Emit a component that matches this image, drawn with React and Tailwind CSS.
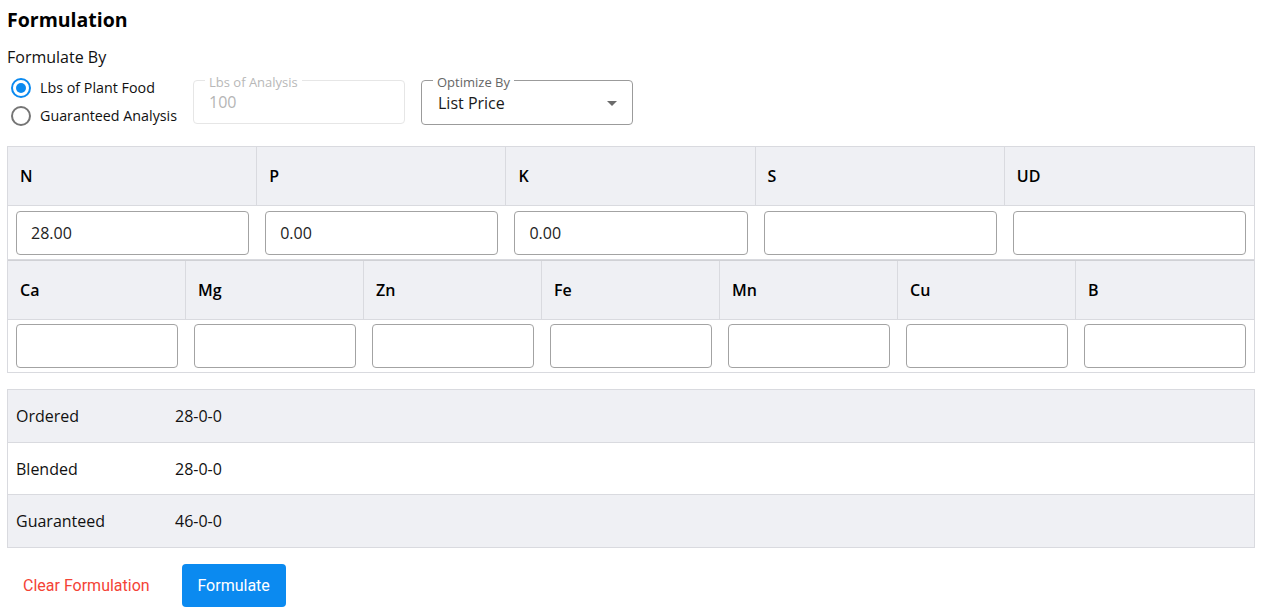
import React from "react";

const font = { fontFamily: '"Open Sans", "Noto Sans", sans-serif' };

const row1 = ["N", "P", "K", "S", "UD"];
const vals1 = ["28.00", "0.00", "0.00", "", ""];
const row2 = ["Ca", "Mg", "Zn", "Fe", "Mn", "Cu", "B"];

function Field({ v }) {
  return (
    <div className="h-[44px] rounded border border-[#a3a3a3] bg-white flex items-center pl-[14px] text-[16px] text-[#222]">
      {v}
    </div>
  );
}

function Grid({ names, values, cols, first }) {
  return (
    <div className={"border border-[#d9dadf] " + (first ? "" : "border-t-0")}>
      <div className={"grid bg-[#eff0f4] h-[59px] border-b border-[#d9dadf] " + (first ? "" : "border-t border-t-[#d0d1d5] h-[60px] ") + cols}>
        {names.map((n, i) => (
          <div key={n} className={"flex items-center pl-[12px] text-[16px] font-semibold text-black " + (i < names.length - 1 ? "border-r border-[#d9dadf]" : "")}>
            {n}
          </div>
        ))}
      </div>
      <div className={"grid pb-[4px] " + (first ? "pt-[5px] " : "pt-[4px] ") + cols}>
        {names.map((n, i) => (
          <div key={n} className="pl-[8px] pr-[8px]">
            <Field v={values ? values[i] : ""} />
          </div>
        ))}
      </div>
    </div>
  );
}

const summary = [
  ["Ordered", "28-0-0", true],
  ["Blended", "28-0-0", false],
  ["Guaranteed", "46-0-0", true],
];

export default function App() {
  return (
    <div className="bg-white min-h-[614px] pl-[7px] pr-[8px] pt-[6px] text-[#111]" style={font}>
      <h2 className="text-[19.5px] font-bold leading-[28px] text-black">Formulation</h2>
      <div className="mt-[12px] text-[16px] leading-[22px]">Formulate By</div>

      <div className="flex items-start mt-[2px]">
        <div className="flex flex-col w-[170px] shrink-0 pt-[4px] whitespace-nowrap">
          <label className="flex items-center h-[28px] gap-[9px] pl-[4px] text-[14.3px]">
            <span className="shrink-0 w-[20px] h-[20px] rounded-full border-2 border-[#0b8af0] flex items-center justify-center">
              <span className="w-[10px] h-[10px] rounded-full bg-[#0b8af0]" />
            </span>
            Lbs of Plant Food
          </label>
          <label className="flex items-center h-[28px] gap-[9px] pl-[4px] text-[14.3px]">
            <span className="shrink-0 w-[20px] h-[20px] rounded-full border-2 border-[#757575]" />
            Guaranteed Analysis
          </label>
        </div>

        <div className="relative ml-[16px] mt-[10px] w-[212px] h-[44px] rounded border border-[#e6e6e6] flex items-center pl-[15px] text-[16px] text-[#b5b5b5]">
          <span className="absolute -top-[7px] left-[11px] bg-white px-[4px] text-[13px] leading-[16px] text-[#b8b8b8]">Lbs of Analysis</span>
          <span>100</span>
        </div>

        <div className="relative ml-[16px] mt-[10px] w-[212px] h-[45px] rounded border border-[#9b9b9b] flex items-center justify-between pl-[16px] pr-[15px] text-[16px] text-[#1a1a1a]">
          <span className="absolute -top-[7px] left-[11px] bg-white px-[4px] text-[13px] leading-[16px] text-[#666]">Optimize By</span>
          <span>List Price</span>
          <svg width="10" height="5" viewBox="0 0 10 5" className="mt-[1px]">
            <path d="M0 0 L10 0 L5 5 Z" fill="#6b6b6b" />
          </svg>
        </div>
      </div>

      <div className="mt-[16px]">
        <Grid names={row1} values={vals1} cols="grid-cols-5" first />
        <Grid names={row2} cols="grid-cols-7" />
      </div>

      <div className="mt-[16px] border border-[#d9dadf]">
        {summary.map(([k, v, g], i) => (
          <div key={k} className={"flex items-center text-[16px] " + (i === 0 ? "h-[53px] " : "h-[52px] ") + (g ? "bg-[#eff0f4]" : "bg-white") + (i < 2 ? " border-b border-[#d9dadf]" : "")}>
            <span className="w-[167px] pl-[8px]">{k}</span>
            <span>{v}</span>
          </div>
        ))}
      </div>

      <div className="flex items-center mt-[16px]" style={{ fontFamily: "Roboto, sans-serif" }}>
        <button className="h-[43px] px-[16px] text-[16px] text-[#f44336]">Clear Formulation</button>
        <button className="ml-[16px] h-[43px] w-[104px] rounded-[4px] bg-[#0b8af0] text-white text-[16px]">Formulate</button>
      </div>
    </div>
  );
}
